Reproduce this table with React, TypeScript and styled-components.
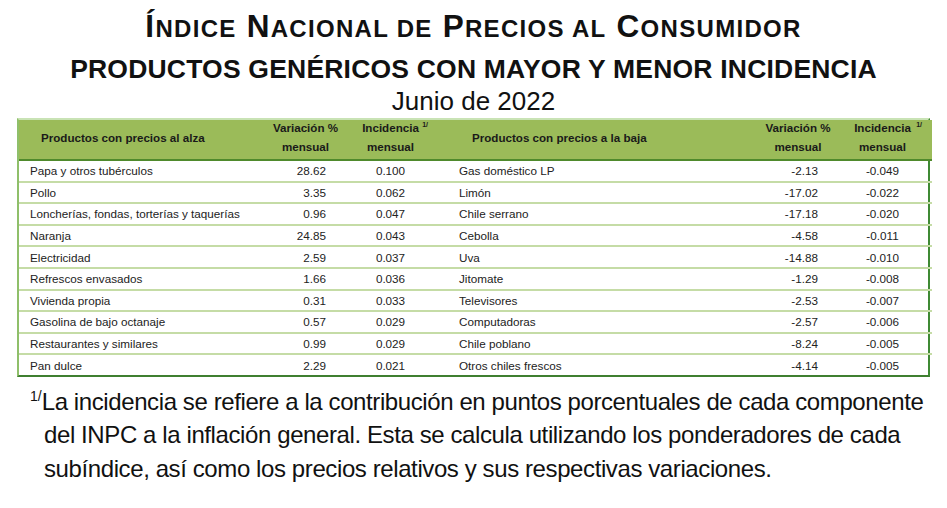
import React from "react";
import styled, { createGlobalStyle } from "styled-components";

const Global = createGlobalStyle`
  html, body { margin: 0; padding: 0; background: #fff; }
  body { font-family: "Liberation Sans", Arial, sans-serif; color: #111; }
`;

const Page = styled.div`
  width: 947px;
  height: 508px;
  overflow: hidden;
  display: flex;
  flex-direction: column;
  align-items: center;
`;

const Title = styled.h1`
  margin: 8px 0 0;
  font-weight: bold;
  font-size: 31.5px;
  line-height: 36px;
  letter-spacing: 1.3px;
  color: #111;
  text-transform: uppercase;
  white-space: nowrap;
`;

const Small = styled.span`
  font-size: 24px;
`;

const Subtitle = styled.h2`
  margin: 8px 0 0;
  font-weight: bold;
  font-size: 26.5px;
  line-height: 28px;
  letter-spacing: 0.2px;
  color: #111;
  white-space: nowrap;
`;

const DateLine = styled.div`
  margin: 4px 0 0;
  font-size: 26px;
  line-height: 28px;
  color: #111;
`;

const Table = styled.div`
  margin-top: 3px;
  width: 913px;
  display: grid;
  grid-template-columns: 249px 75px 95px 325px 70px 99px;
  border-left: 2px solid #8fbf6a;
  border-right: 2px solid #3f8a34;
  border-top: 2px solid #c9e3b5;
  border-bottom: 2px solid #3f7f30;
  box-sizing: border-box;
`;

const HeadCell = styled.div<{ $align?: "left" | "center"; $pl?: number }>`
  position: relative;
  box-sizing: border-box;
  background: #9bbb59;
  height: 41px;
  padding-bottom: 5px;
  border-bottom: 2px solid #4f8a2c;
  display: flex;
  flex-direction: column;
  justify-content: center;
  align-items: ${(p) => (p.$align === "left" ? "flex-start" : "center")};
  padding-left: ${(p) => p.$pl ?? 0}px;
  font-size: 11.6px;
  font-weight: bold;
  line-height: 19px;
  color: #1a1a1a;
  text-align: center;
  white-space: nowrap;
`;

const Sup = styled.span`
  position: absolute;
  top: 1px;
  right: 10px;
  font-size: 7px;
  font-weight: bold;
  line-height: 8px;
`;

const Cell = styled.div<{ $align: "left" | "right" | "center"; $pad: number }>`
  height: 19.6px;
  border-bottom: 2px solid #c5dca6;
  display: flex;
  align-items: center;
  justify-content: ${(p) =>
    p.$align === "left" ? "flex-start" : p.$align === "right" ? "flex-end" : "center"};
  padding-left: ${(p) => (p.$align === "left" ? p.$pad : 0)}px;
  padding-right: ${(p) => (p.$align === "right" ? p.$pad : 0)}px;
  font-size: 11.7px;
  color: #222;
  white-space: nowrap;
  &:nth-last-child(-n + 6) {
    border-bottom: none;
  }
`;

const Footnote = styled.p`
  align-self: stretch;
  margin: 8px 0 0;
  padding: 0 10px 0 44px;
  font-size: 24px;
  line-height: 33.5px;
  letter-spacing: -0.4px;
  color: #111;
  text-indent: -14px;
`;

const FootSup = styled.sup`
  font-size: 14px;
  vertical-align: 9px;
  line-height: 0;
  letter-spacing: 0;
`;

type Row = [string, string, string, string, string, string];

const rows: Row[] = [
  ["Papa y otros tubérculos", "28.62", "0.100", "Gas doméstico LP", "-2.13", "-0.049"],
  ["Pollo", "3.35", "0.062", "Limón", "-17.02", "-0.022"],
  ["Loncherías, fondas, torterías y taquerías", "0.96", "0.047", "Chile serrano", "-17.18", "-0.020"],
  ["Naranja", "24.85", "0.043", "Cebolla", "-4.58", "-0.011"],
  ["Electricidad", "2.59", "0.037", "Uva", "-14.88", "-0.010"],
  ["Refrescos envasados", "1.66", "0.036", "Jitomate", "-1.29", "-0.008"],
  ["Vivienda propia", "0.31", "0.033", "Televisores", "-2.53", "-0.007"],
  ["Gasolina de bajo octanaje", "0.57", "0.029", "Computadoras", "-2.57", "-0.006"],
  ["Restaurantes y similares", "0.99", "0.029", "Chile poblano", "-8.24", "-0.005"],
  ["Pan dulce", "2.29", "0.021", "Otros chiles frescos", "-4.14", "-0.005"],
];

export default function App() {
  return (
    <Page>
      <Global />
      <Title>
        Í<Small>ndice</Small> N<Small>acional de</Small> P<Small>recios al</Small> C
        <Small>onsumidor</Small>
      </Title>
      <Subtitle>PRODUCTOS GENÉRICOS CON MAYOR Y MENOR INCIDENCIA</Subtitle>
      <DateLine>Junio de 2022</DateLine>
      <Table>
        <HeadCell $align="left" $pl={22}>Productos con precios al alza</HeadCell>
        <HeadCell>
          <span>Variación %</span>
          <span>mensual</span>
        </HeadCell>
        <HeadCell>
          <span>Incidencia</span>
          <span>mensual</span>
          <Sup>1/</Sup>
        </HeadCell>
        <HeadCell $align="left" $pl={34}>Productos con precios a la baja</HeadCell>
        <HeadCell>
          <span>Variación %</span>
          <span>mensual</span>
        </HeadCell>
        <HeadCell>
          <span>Incidencia</span>
          <span>mensual</span>
          <Sup>1/</Sup>
        </HeadCell>
        {rows.map((r, i) => (
          <React.Fragment key={i}>
            <Cell $align="left" $pad={11}>{r[0]}</Cell>
            <Cell $align="right" $pad={17}>{r[1]}</Cell>
            <Cell $align="center" $pad={0}>{r[2]}</Cell>
            <Cell $align="left" $pad={21}>{r[3]}</Cell>
            <Cell $align="right" $pad={15}>{r[4]}</Cell>
            <Cell $align="center" $pad={0}>{r[5]}</Cell>
          </React.Fragment>
        ))}
      </Table>
      <Footnote>
        <FootSup>1/</FootSup>La incidencia se refiere a la contribución en puntos porcentuales de cada componente
        del INPC a la inflación general. Esta se calcula utilizando los ponderadores de cada
        subíndice, así como los precios relativos y sus respectivas variaciones.
      </Footnote>
    </Page>
  );
}
